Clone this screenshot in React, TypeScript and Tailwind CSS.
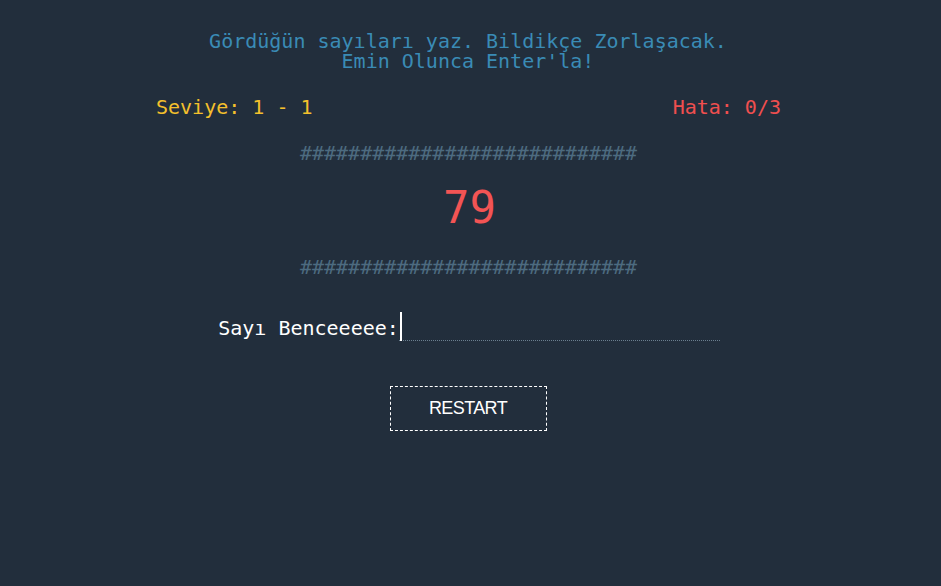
import { useState } from "react";

const mono = { fontFamily: '"DejaVu Sans Mono", "Liberation Mono", monospace' };
const hashes = "############################";

export default function App() {
	const [guess, setGuess] = useState("");

	return (
		<div className="min-h-[586px] w-full bg-[#222e3c] flex flex-col items-center" style={mono}>
			{/* Başlık */}
			<div className="mt-[31px] ml-[-5px] text-center text-[20px] leading-[20px] text-[#3a8bb5]">
				<div>Gördüğün sayıları yaz. Bildikçe Zorlaşacak.</div>
				<div>Emin Olunca Enter'la!</div>
			</div>

			{/* Seviye / Hata */}
			<div className="mt-[24px] w-[625px] ml-[-4px] flex justify-between text-[20px] leading-[24px]">
				<span className="text-[#f4c02c]">Seviye: 1 - 1</span>
				<span className="text-[#f04f4f]">Hata: 0/3</span>
			</div>

			<div className="mt-[22px] ml-[-4px] text-[20px] leading-[24px] text-[#4d6b80]">{hashes}</div>

			<div className="mt-[17px] ml-[-2px] text-[44px] leading-[52px] text-[#f35454]">79</div>

			<div className="mt-[21px] ml-[-4px] text-[20px] leading-[24px] text-[#4d6b80]">{hashes}</div>

			{/* Giriş */}
			<div className="mt-[33px] ml-[-3px] flex items-end">
				<label className="text-[20px] leading-[24px] text-white pb-[1px]">Sayı Benceeeee:</label>
				<div className="relative w-[321px] h-[29px] border-b border-dotted border-[#6b7f8f]">
					<span className="absolute left-[1px] top-0 w-[2px] h-[29px] bg-white" />
					<input
						value={guess}
						onChange={(e) => setGuess(e.target.value)}
						className="w-full h-full bg-transparent outline-none text-white text-[20px] pl-[4px] caret-transparent"
						style={mono}
					/>
				</div>
			</div>

			<button
				className="mt-[45px] ml-[-5px] w-[157px] h-[45px] border border-dashed border-white text-white text-[18px] tracking-[-0.6px]"
				style={{ fontFamily: '"Liberation Sans", Arial, sans-serif' }}
			>
				RESTART
			</button>
		</div>
	);
}
